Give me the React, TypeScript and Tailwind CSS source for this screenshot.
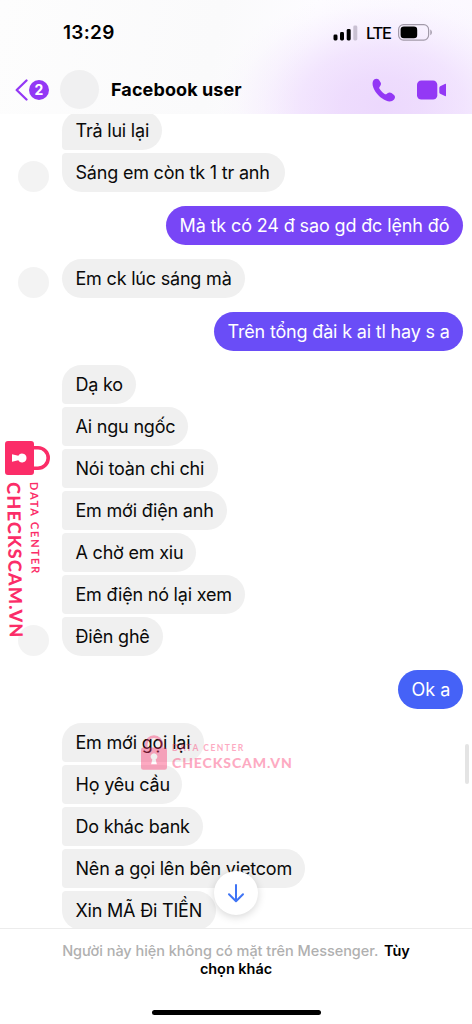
import clsx from "clsx";

type TypeMessage = {
  text: string;
  className: string;
};

type TypeMessageGroup = {
  mine?: boolean;
  showAvatar?: boolean;
  messages: TypeMessage[];
};

const messageGroups: TypeMessageGroup[] = [
  {
    showAvatar: true,
    messages: [
      { text: "Trả lui lại", className: "w-[100px]" },
      { text: "Sáng em còn tk 1 tr anh", className: "w-[223px]" },
    ],
  },
  {
    mine: true,
    messages: [
      {
        text: "Mà tk có 24 đ sao gd đc lệnh đó",
        className: "w-[297px] bg-[#7846f6] tracking-[-0.13px]",
      },
    ],
  },
  {
    showAvatar: true,
    messages: [{ text: "Em ck lúc sáng mà", className: "w-[183px]" }],
  },
  {
    mine: true,
    messages: [
      {
        text: "Trên tổng đài k ai tl hay s a",
        className: "w-[249px] bg-[#6a4df7] tracking-[-0.17px]",
      },
    ],
  },
  {
    showAvatar: true,
    messages: [
      { text: "Dạ ko", className: "w-[74px]" },
      { text: "Ai ngu ngốc", className: "w-[126px]" },
      { text: "Nói toàn chi chi", className: "w-[156px]" },
      { text: "Em mới điện anh", className: "w-[165px]" },
      { text: "A chờ em xiu", className: "w-[134px]" },
      { text: "Em điện nó lại xem", className: "w-[183px]" },
      { text: "Điên ghê", className: "w-[101px]" },
    ],
  },
  {
    mine: true,
    messages: [{ text: "Ok a", className: "w-[65px] bg-[#4562f7]" }],
  },
  {
    messages: [
      { text: "Em mới gọi lại", className: "w-[142px]" },
      { text: "Họ yêu cầu", className: "w-[120px]" },
      { text: "Do khác bank", className: "w-[141px]" },
      { text: "Nên a gọi lên bên vietcom", className: "w-[243px]" },
      { text: "Xin MÃ Đi TIỀN", className: "w-[154px]" },
    ],
  },
];

const StatusBar = () => {
  return (
    <div className="flex h-[65px] items-center justify-between pl-[63px] pr-[39px]">
      <div className="text-[19px] font-semibold leading-6 tracking-[0.3px]">
        13:29
      </div>
      <div className="flex items-center">
        <svg width="25" height="16" viewBox="0 0 25 16">
          <rect x="0.5" y="9.5" width="4" height="6" rx="1.4" />
          <rect x="7" y="7" width="4" height="8.5" rx="1.4" />
          <rect x="13.7" y="4" width="4" height="11.5" rx="1.4" />
          <rect x="20.3" y="0.5" width="4" height="15" rx="1.4" fill="#c9c0d2" />
        </svg>
        <div className="ml-[8px] w-[24px] text-[16.5px] font-medium leading-5 tracking-[-1.3px]">
          LTE
        </div>
        <svg className="ml-[8px]" width="35" height="17" viewBox="0 0 35 17">
          <rect
            x="0.6"
            y="0.7"
            width="30"
            height="15.4"
            rx="4.8"
            fill="none"
            stroke="#a29aa9"
            strokeWidth="1.2"
          />
          <rect x="2.6" y="2.6" width="16.6" height="11.6" rx="3.3" />
          <path d="M32.3 5.6c2.1.9 2.1 4.7 0 5.6z" fill="#a29aa9" />
        </svg>
      </div>
    </div>
  );
};

const ChatHeader = () => {
  return (
    <div className="relative z-10 h-[114px] shrink-0 bg-[radial-gradient(ellipse_165px_115px_at_382px_106px,#ecd8fdff_0%,#ecd8fde0_25%,#ecd8fda0_50%,#ecd8fd42_72%,#ecd8fd10_88%,#ecd8fd00_100%),linear-gradient(100deg,#fdfdfd,#fafafb_45%,#fdfcff_65%,#fbf8ff_100%)]">
      <StatusBar />
      <div className="flex h-[49px] items-center pl-[15px] pr-[25px] text-[#9338f5]">
        <svg width="14" height="22" viewBox="0 0 14 22">
          <path
            d="M11.5 1.5 1.7 11l9.8 9.5"
            fill="none"
            stroke="currentColor"
            strokeWidth="2.3"
            strokeLinecap="round"
            strokeLinejoin="round"
          />
        </svg>
        <div className="flex h-5 w-5 items-center justify-center rounded-full bg-[#9338f5] text-[14px] font-bold text-white">
          2
        </div>
        <div className="ml-[11px] h-[39px] w-[39px] rounded-full bg-[#f0f0f1]" />
        <div className="ml-[12px] text-[18px] font-bold tracking-[0.1px] text-black">
          Facebook user
        </div>
        <svg
          className="ml-auto"
          width="24"
          height="24"
          viewBox="0 0 24 24"
          fill="currentColor"
        >
          <path d="M2.1 1.6C3.3.5 5.4.2 6.7 1.5l1.8 2.7c.9 1.4.5 2.8-.5 4l-.5.7c-.5.7-.3 1.4.2 2.2 1.2 1.9 2.7 3.4 4.6 4.7.8.6 1.6.8 2.3.2l.9-.7c1.2-1 2.7-1.2 4-.2l2.5 2c1.4 1.200 1.300 3.100.1 4.400-2 2.100-4.900 2.500-8.200 1C8.500 20.100 3.500 15.200 1.400 9.700.1 6.300.2 3.500 2.100 1.600z" />
        </svg>
        <svg
          className="ml-[21px]"
          width="30"
          height="20"
          viewBox="0 0 30 20"
          fill="currentColor"
        >
          <rect x="0" y="0.5" width="20.3" height="19" rx="4.3" />
          <path d="M22.3 7.900c0-.7.300-1.200.9-1.600l4.700-2.400c.7-.4 1.100-.1 1.100.6v11c0 .7-.4 1-1.100.6l-4.700-2.400c-.6-.3-.9-.8-.9-1.500z" />
        </svg>
      </div>
    </div>
  );
};

const MessageGroup = ({ mine, showAvatar, messages }: TypeMessageGroup) => {
  return (
    <div
      className={clsx(
        "flex items-end",
        mine ? "justify-end pr-[9px]" : "pl-[18px]"
      )}
    >
      {!mine && (
        <div
          className={clsx(
            "mr-[13px] h-[31px] w-[31px] shrink-0 rounded-full",
            showAvatar && "bg-[#f3f3f3]"
          )}
        />
      )}
      <div className="flex flex-col gap-[2.5px]">
        {messages.map((message, index) => (
          <div
            key={message.text}
            className={clsx(
              "flex h-[39.5px] items-center whitespace-nowrap rounded-[20px] pl-[13.5px] text-[18px]",
              mine
                ? "text-white"
                : "bg-[#f0f0f0] tracking-[-0.2px] text-[#0a0a0a]",
              !mine && index > 0 && "rounded-tl-[4px]",
              !mine && index < messages.length - 1 && "rounded-bl-[4px]",
              message.className
            )}
          >
            {message.text}
          </div>
        ))}
      </div>
    </div>
  );
};

const LockIcon = ({ className }: { className?: string }) => {
  return (
    <svg className={className} viewBox="0 0 34 45" fill="currentColor">
      <path
        d="M6.8 16V12a10.2 10.2 0 0 1 20.4 0V16"
        fill="none"
        stroke="currentColor"
        strokeWidth="3.6"
      />
      <path
        fillRule="evenodd"
        d="M3 16h28a3 3 0 0 1 3 3v23a3 3 0 0 1-3 3H3a3 3 0 0 1-3-3V19a3 3 0 0 1 3-3zM17 23.5a4.4 4.4 0 0 0-2.2 8.2l-1.6 6.3h7.6l-1.6-6.3A4.4 4.4 0 0 0 17 23.5z"
      />
    </svg>
  );
};

const SideWatermark = () => {
  return (
    <div className="absolute left-[5px] top-[441px] z-20 flex w-[46px] flex-col font-['Lato'] text-[#fb2d68]">
      <div className="h-[35px] w-[45px]">
        <LockIcon className="h-[45px] w-[34px] origin-top-left translate-x-[45px] rotate-90" />
      </div>
      <div className="mt-[6px] flex origin-top -rotate-1 flex-row-reverse justify-end [&>div]:[writing-mode:vertical-rl]">
        <div className="ml-[5px] whitespace-nowrap text-[11px] font-bold leading-[12px] tracking-[1.85px]">
          DATA CENTER
        </div>
        <div className="whitespace-nowrap text-[18px] font-black leading-[18px] tracking-[1.25px]">
          CHECKSCAM.VN
        </div>
      </div>
    </div>
  );
};

const CenterWatermark = () => {
  return (
    <div className="absolute left-[141px] top-[735px] z-20 flex font-['Lato'] text-[#fb2d68] opacity-40">
      <LockIcon className="h-[35px] w-[26px]" />
      <div className="ml-[5px] mt-[8px] whitespace-nowrap">
        <div className="text-[8.5px] font-bold leading-[10px] tracking-[1.5px]">
          DATA CENTER
        </div>
        <div className="mt-[2px] text-[14px] font-black leading-[16px] tracking-[0.9px]">
          CHECKSCAM.VN
        </div>
      </div>
    </div>
  );
};

const ChatFooter = () => {
  return (
    <div className="relative flex h-24 shrink-0 flex-col items-center border-t border-[#ececec] bg-white">
      <div className="mt-[13px] w-[370px] text-center text-[14.5px] font-medium leading-[18px] tracking-[-0.04px] text-[#b0b0b0]">
        Người này hiện không có mặt trên Messenger.{" "}
        <span className="font-semibold text-black">
          <span className="ml-[2px]">Tùy</span>
          <br />
          chọn khác
        </span>
      </div>
      <div className="mb-[9px] mt-auto h-[5.5px] w-[169px] rounded-full bg-black" />
    </div>
  );
};

const App = () => {
  return (
    <div className="relative flex h-[1024px] w-[472px] flex-col overflow-hidden bg-white font-['Inter',sans-serif] text-black">
      <ChatHeader />
      <div className="min-h-0 flex-1 overflow-hidden">
        <div className="-mt-[3.5px] flex flex-col gap-[13.5px]">
          {messageGroups.map((group, index) => (
            <MessageGroup key={index} {...group} />
          ))}
        </div>
      </div>
      <ChatFooter />

      <SideWatermark />
      <CenterWatermark />

      <div className="absolute right-[3px] top-[744px] h-10 w-[4px] rounded-full bg-[#e4e4e4]" />
      <button className="absolute left-[214px] top-[871px] z-20 flex h-11 w-11 items-center justify-center rounded-full bg-white shadow-[0_2px_8px_rgba(0,0,0,0.16)]">
        <svg width="18" height="20" viewBox="0 0 18 20">
          <path
            d="M9 2v16M2 11.2l7 7 7-7"
            fill="none"
            stroke="#3f74f5"
            strokeWidth="2"
            strokeLinecap="round"
            strokeLinejoin="round"
          />
        </svg>
      </button>
    </div>
  );
};

export default App;
